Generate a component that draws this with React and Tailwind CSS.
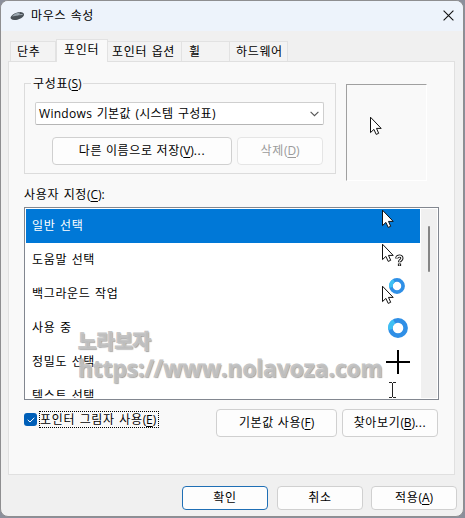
import React from 'react';

const Key = ({ k }) => (
  <span className="tracking-[-0.1px]">
    (<span className="underline decoration-1 underline-offset-[2px]">{k}</span>)
  </span>
);

const Button = ({ className = '', children }) => (
  <button
    className={`flex shrink-0 items-center justify-center rounded-[4px] border bg-[#fdfdfd] whitespace-nowrap ${className}`}
  >
    <span>{children}</span>
  </button>
);

const Arrow = ({ className = '' }) => (
  <svg className={className} width="13" height="20" viewBox="0 0 13 20">
    <path
      d="M.5 1.2V16.6L3.9 13.4L6.2 18.4L8.7 17.3L6.5 12.4H11.2L.5 1.2Z"
      fill="#fff"
      stroke="#111"
      strokeWidth="1"
    />
  </svg>
);

const Ring = ({ size, className = '' }) => (
  <svg className={className} width={size} height={size} viewBox="0 0 20 20">
    <circle cx="10" cy="10" r="7.6" fill="#fff" stroke="#2f8fe6" strokeWidth="4.6" />
    <path d="M2.6 11.6A7.6 7.6 0 0 1 6.2 3.4" fill="none" stroke="#3fc0f3" strokeWidth="4.6" />
  </svg>
);

const HelpArrow = () => (
  <div className="flex">
    <Arrow />
    <svg className="mt-[11px]" width="9" height="13" viewBox="0 0 9 13">
      <path d="M1.8 4.6C1.8 1.2 6.9 1.2 6.9 4.2C6.9 6.2 4.5 6.2 4.5 8.2M4.5 9.6V12" fill="none" stroke="#111" strokeWidth="3.2" />
      <path d="M1.8 4.2C1.8 1.4 6.9 1.2 6.9 4.2C6.9 6.2 4.5 6.2 4.5 7.8M4.5 10.2V11.4" fill="none" stroke="#fff" strokeWidth="1.3" />
    </svg>
  </div>
);

const WorkingArrow = () => (
  <div className="flex">
    <Arrow className="mt-[7px]" />
    <Ring size={16} className="-ml-[6px]" />
  </div>
);

const rows = [
  { name: '일반 선택', icon: <Arrow />, pad: 'pl-[356px] pt-[0px]' },
  { name: '도움말 선택', icon: <HelpArrow />, pad: 'pl-[356px] pt-[0px]' },
  { name: '백그라운드 작업', icon: <WorkingArrow />, pad: 'pl-[356px] pt-[1px]' },
  { name: '사용 중', icon: <Ring size={20} />, pad: 'pl-[362px] pt-[7px]' },
  {
    name: '정밀도 선택',
    icon: (
      <svg width="24" height="24" viewBox="0 0 24 24">
        <path d="M12 0V24M0 12H24" stroke="#000" strokeWidth="2" />
      </svg>
    ),
    pad: 'pl-[360px] pt-[5px]',
  },
  {
    name: '텍스트 선택',
    icon: (
      <svg width="7" height="17" viewBox="0 0 7 17">
        <path d="M0 .5H3M4 .5H7M3.5 1V15M0 15.5H3M4 15.5H7" stroke="#222" strokeWidth="1" />
      </svg>
    ),
    pad: 'pl-[363px] pt-[3px]',
  },
];

const Tab = ({ className = '', children }) => (
  <div className={`border-t border-r border-[#e2e2e2] bg-[#f3f3f3] whitespace-nowrap ${className}`}>{children}</div>
);

export default function App() {
  return (
    <div className="h-[518px] w-[465px] overflow-hidden bg-[#8b8f9b] font-['Open_Sans','Noto_Sans_CJK_KR',sans-serif] text-[12px] leading-[16px] tracking-[0.65px] text-black [word-spacing:0.8px]">
      <div className="relative flex h-[517px] w-[464px] flex-col overflow-hidden rounded-[8px] border border-[#8e8e90] bg-[#f0f0f0]">
        <div className="flex h-[30px] shrink-0 items-center justify-between bg-[#edf3fb] pr-[9px] pl-[9px]">
          <div className="flex items-center">
            <svg width="15" height="10" viewBox="0 0 15 10">
              <path d="M.6 6.3C2 3.2 7 .8 10.5 1C13.2 1.2 14.8 3 13.7 4.8C12 7.5 7.5 9.3 4.2 9C1.6 8.8.2 7.6.6 6.3Z" fill="#4a5157" />
              <path d="M2 5.6C4 3.1 7.3 1.5 10.4 1.6L8 4.6Z" fill="#98a4ad" />
              <path d="M7.6 3.8L12.6 3.5" stroke="#b7c2ca" strokeWidth=".8" />
            </svg>
            <span className="pl-[6px]">마우스 속성</span>
          </div>
          <svg className="-mt-px" width="11" height="11" viewBox="0 0 11 11">
            <path d="M.6 .6L10.4 10.4M10.4 .6L.6 10.4" stroke="#111" strokeWidth="1.1" />
          </svg>
        </div>

        <div className="flex h-[30px] shrink-0 items-end pl-[9px]">
          <Tab className="h-5 w-[46px] border-l pt-[2px] pl-[6px]">단추</Tab>
          <Tab className="z-10 -mb-px h-[23px] w-[52px] border-l bg-[#f9f9f9] pt-[2px] pl-[7px]">포인터</Tab>
          <Tab className="h-5 w-[74px] pt-[2px] pl-[4px]">포인터 옵션</Tab>
          <Tab className="h-5 w-[48px] pt-[2px] pl-[7px]">휠</Tab>
          <Tab className="h-5 w-[58px] pt-[2px] pl-[6px]">하드웨어</Tab>
        </div>

        <div className="ml-[7px] flex h-[414px] w-[447px] shrink-0 flex-col border border-[#e0e0e0] bg-[#f9f9f9] pt-[13px] pl-[15px]">
          <div className="flex">
            <fieldset className="h-[99px] w-[312px] border border-[#dcdcdc] pl-[10px]">
              <legend className="-ml-[4px] h-4 px-[2px] pt-px">
                구성표<Key k="S" />
              </legend>
              <div className="mt-[11px] flex h-[23px] w-[289px] items-center justify-between rounded-[2px] border border-[#cfcfcf] border-b-[#b5b5b5] bg-white pr-[4px] pl-[3px]">
                <span className="pt-px tracking-[0.3px] [word-spacing:1.2px]">Windows 기본값 (시스템 구성표)</span>
                <svg width="9" height="6" viewBox="0 0 9 6">
                  <path d="M.6 .8L4.5 4.7L8.4 .8" fill="none" stroke="#555" strokeWidth="1.1" />
                </svg>
              </div>
              <div className="mt-[12px] flex gap-[5px] pl-[17px]">
                <Button className="h-7 w-[180px] border-[#d0d0d0]">
                  다른 이름으로 저장<Key k="V" />...
                </Button>
                <Button className="h-7 w-[86px] border-[#e5e5e5] bg-[#f9f9f9] text-[#9b9b9b]">
                  삭제<Key k="D" />
                </Button>
              </div>
            </fieldset>
            <div className="mt-[9px] ml-[10px] h-[97px] w-[81px] border border-t-[#a0a0a0] border-r-white border-b-white border-l-[#a0a0a0] pt-[31px] pl-[23px]">
              <Arrow />
            </div>
          </div>

          <div className="mt-[5px] h-[21px] pt-px">
            사용자 지정<Key k="C" />:
          </div>
          <div className="flex h-[193px] w-[415px] shrink-0 overflow-hidden border border-[#828790] bg-white p-px">
            <div className="h-[189px] w-[395px] overflow-hidden">
              {rows.map((row, i) => (
                <div
                  key={row.name}
                  className={`grid h-[34px] w-[394px] ${i === 0 ? 'bg-[#0078d7] text-white' : ''}`}
                >
                  <span className="col-start-1 row-start-1 pt-[9px] pl-[6px]">{row.name}</span>
                  <div className={`col-start-1 row-start-1 ${row.pad}`}>{row.icon}</div>
                </div>
              ))}
            </div>
            <div className="w-4 bg-[#f0f0f0] pt-[17px] pl-[7px]">
              <div className="h-[46px] w-[2px] rounded-full bg-[#858585]" />
            </div>
          </div>

          <div className="mt-[9px] flex">
            <div className="mt-[4px] flex h-[13px] w-[13px] items-center justify-center rounded-[3px] bg-[#005fb8]">
              <svg width="8" height="6" viewBox="0 0 8 6">
                <path d="M.7 2.8L3 5L7.3 .8" fill="none" stroke="#fff" strokeWidth="1" />
              </svg>
            </div>
            <div className="mt-[2px] ml-[2px] h-[17px] w-[120px] border border-dotted border-black leading-[16px] whitespace-nowrap">
              포인터 그림자 사용<Key k="E" />
            </div>
            <Button className="ml-[57px] h-7 w-[121px] border-[#d0d0d0]">
              기본값 사용<Key k="F" />
            </Button>
            <Button className="ml-[5px] h-7 w-[96px] border-[#d0d0d0]">
              찾아보기<Key k="B" />...
            </Button>
          </div>
        </div>

        <div className="mt-[11px] flex pl-[181px]">
          <Button className="h-6 w-[86px] border-[#1f6fb5]">확인</Button>
          <Button className="ml-[9px] h-6 w-[86px] border-[#d0d0d0]">취소</Button>
          <Button className="ml-[8px] h-6 w-[86px] border-[#d0d0d0]">
            적용<Key k="A" />
          </Button>
        </div>

        <div className="absolute top-[329px] left-[77px] font-bold whitespace-nowrap text-[#c3c3c3]/90 [text-shadow:1px_1px_1px_#999] [word-spacing:0px]">
          <div className="text-[20px] leading-[24px] font-black tracking-[-0.2px] [-webkit-text-stroke:0.8px_#c3c3c3]">노라보자</div>
          <div className="text-[22.5px] leading-[30px] tracking-[0.05px] [-webkit-text-stroke:0.8px_#c3c3c3]">https://www.nolavoza.com</div>
        </div>
      </div>
    </div>
  );
}
